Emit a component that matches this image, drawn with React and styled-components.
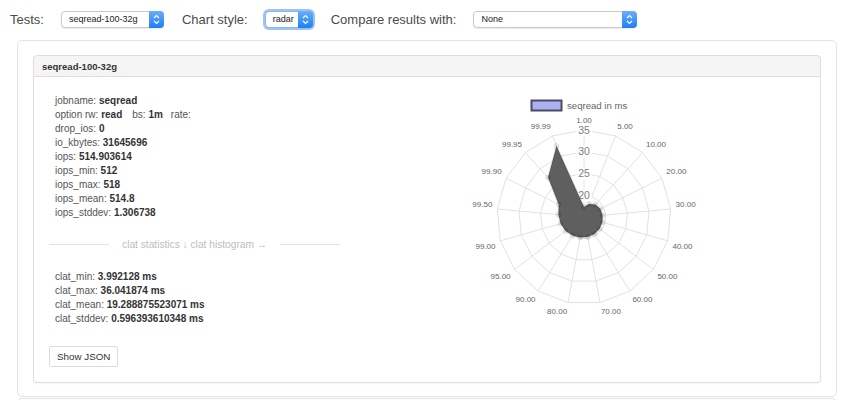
import styled, { createGlobalStyle, css } from 'styled-components';

const GlobalStyle = createGlobalStyle`
  body {
    margin: 0;
    background: #fff;
    font-family: "Liberation Sans", Arial, sans-serif;
    color: #333;
    overflow: hidden;
  }
`;

const LABELS = ['1.00', '5.00', '10.00', '20.00', '30.00', '40.00', '50.00', '60.00', '70.00', '80.00', '90.00', '95.00', '99.00', '99.50', '99.90', '99.95', '99.99'];
const VALUES = [17.3, 18.2, 18.9, 19.2, 19.3, 19.4, 19.5, 19.6, 19.7, 19.8, 20.0, 20.3, 20.6, 20.9, 21.5, 27.3, 32.5];

const CX = 229;
const CY = 140;
const R = 87;
const MIN = 15;
const MAX = 35;
const TICKS = [20, 25, 30, 35];

const radius = v => ((v - MIN) / (MAX - MIN)) * R;
const point = (i, r) => {
  const a = (i * 2 * Math.PI) / LABELS.length;
  return [CX + r * Math.sin(a), CY - r * Math.cos(a)];
};
const poly = pts => pts.map(p => p.map(n => n.toFixed(1)).join(',')).join(' ');

function Stepper() {
  return (
    <StepBox>
      <svg width="7" height="11" viewBox="0 0 7 11">
        <path d="M1 4 L3.5 1.5 L6 4 M1 7 L3.5 9.5 L6 7" fill="none" stroke="#fff" strokeWidth="1.2" />
      </svg>
    </StepBox>
  );
}

function Select({ value, width, focused }) {
  return (
    <SelectBox $width={width} $focused={focused}>
      <SelectText>{value}</SelectText>
      <Stepper />
    </SelectBox>
  );
}

function RadarChart() {
  const outer = LABELS.map((_, i) => point(i, R));
  const data = VALUES.map((v, i) => point(i, radius(v)));

  return (
    <svg width="465" height="300" viewBox="0 0 465 300">
      <rect x="176.5" y="23.5" width="30" height="10" fill="#aab1f0" stroke="#4b4b66" strokeWidth="2" />
      <text x="212" y="32" fontSize="9.6" fill="#666" fontFamily="Liberation Sans, Arial, sans-serif">
        seqread in ms
      </text>

      {TICKS.map(t => (
        <polygon
          key={t}
          points={poly(LABELS.map((_, i) => point(i, radius(t))))}
          fill="none"
          stroke="#e2e2e2"
          strokeWidth="1"
        />
      ))}
      {outer.map(([x, y], i) => (
        <line key={i} x1={CX} y1={CY} x2={x} y2={y} stroke="#e2e2e2" strokeWidth="1" />
      ))}

      {TICKS.map(t => {
        const y = CY - radius(t);
        return (
          <g key={t}>
            <rect x={CX - 8} y={y - 6} width="16" height="12" fill="rgba(255,255,255,0.75)" />
            <text
              x={CX}
              y={y + 3.7}
              fontSize="10.5"
              fill="#808080"
              textAnchor="middle"
              fontFamily="Liberation Sans, Arial, sans-serif"
            >
              {t}
            </text>
          </g>
        );
      })}

      <polygon points={poly(data)} fill="#5f5f5f" stroke="rgba(0,0,0,0.08)" strokeWidth="2" strokeLinejoin="round" />
      {data.map(([x, y], i) => (
        <circle key={i} cx={x} cy={y} r="2.5" fill="rgba(0,0,0,0.07)" stroke="rgba(0,0,0,0.08)" />
      ))}

      {LABELS.map((label, i) => {
        const a = (i * 360) / LABELS.length;
        const [x, y] = point(i, R + 5);
        const anchor = a === 0 || a === 180 ? 'middle' : a < 180 ? 'start' : 'end';
        const upper = a < 90 || a > 270;
        return (
          <text
            key={label}
            x={x}
            y={upper ? y - 2 : y + 7}
            fontSize="8"
            fill="#666"
            textAnchor={anchor}
            fontFamily="Liberation Sans, Arial, sans-serif"
          >
            {label}
          </text>
        );
      })}
    </svg>
  );
}

const STATS = [
  ['iops', '514.903614'],
  ['iops_min', '512'],
  ['iops_max', '518'],
  ['iops_mean', '514.8'],
  ['iops_stddev', '1.306738'],
];

const CLAT = [
  ['clat_min', '3.992128 ms'],
  ['clat_max', '36.041874 ms'],
  ['clat_mean', '19.288875523071 ms'],
  ['clat_stddev', '0.596393610348 ms'],
];

export default function App() {
  return (
    <>
      <GlobalStyle />
      <TopBar>
        <BarLabel>Tests:</BarLabel>
        <Select value="seqread-100-32g" width={103} />
        <BarLabel>Chart style:</BarLabel>
        <Select value="radar" width={48} focused />
        <BarLabel>Compare results with:</BarLabel>
        <Select value="None" width={164} />
      </TopBar>

      <Panel>
        <Card>
          <CardHeading>seqread-100-32g</CardHeading>
          <CardBody>
            <InfoColumn>
              <Stats>
                <Row>
                  jobname: <b>seqread</b>
                </Row>
                <Row>
                  option rw: <b>read</b>
                  <Gap $w={10}>bs: </Gap>
                  <b>1m</b>
                  <Gap $w={8}>rate:</Gap>
                </Row>
                <Row>
                  drop_ios: <b>0</b>
                </Row>
                <Row>
                  io_kbytes: <b>31645696</b>
                </Row>
                {STATS.map(([k, v]) => (
                  <Row key={k}>
                    {k}: <b>{v}</b>
                  </Row>
                ))}
              </Stats>

              <Divider>
                <DividerLine />
                <DividerText>clat statistics ↓ clat histogram →</DividerText>
                <DividerLine />
              </Divider>

              <Stats $top={19}>
                {CLAT.map(([k, v]) => (
                  <Row key={k}>
                    {k}: <b>{v}</b>
                  </Row>
                ))}
              </Stats>

              <JsonButton>Show JSON</JsonButton>
            </InfoColumn>
            <ChartColumn>
              <RadarChart />
            </ChartColumn>
          </CardBody>
        </Card>
      </Panel>
      <NextPanel />
    </>
  );
}

const TopBar = styled.div`
  display: flex;
  align-items: center;
  height: 18px;
  padding: 10px 10px 0;
`;

const BarLabel = styled.span`
  font-size: 13px;
  color: #4a4a4a;
  margin-right: 17px;
  white-space: nowrap;
`;

const SelectBox = styled.div`
  box-sizing: border-box;
  display: flex;
  align-items: center;
  width: ${p => p.$width}px;
  height: 17px;
  margin-right: 18px;
  background: #fff;
  border: 1px solid #c9c9c9;
  border-radius: 4px;
  box-shadow: 0 1px 1px rgba(0, 0, 0, 0.08);
  ${p =>
    p.$focused &&
    css`
      border-color: #8fb6ee;
      box-shadow: 0 0 0 2px #9cc2f7;
    `}
`;

const SelectText = styled.span`
  flex: 1;
  padding-left: 7px;
  font-size: 9px;
  color: #222;
  white-space: nowrap;
  overflow: hidden;
`;

const StepBox = styled.span`
  display: flex;
  align-items: center;
  justify-content: center;
  width: 15px;
  height: 17px;
  margin: -1px -1px -1px 0;
  border-radius: 0 4px 4px 0;
  background: linear-gradient(#6aaefb, #1f7ff3);
`;

const Panel = styled.div`
  margin: 12px 6px 0 17px;
  padding: 14px 15px 13px;
  border: 1px solid #e3e3e3;
  border-radius: 5px;
`;

const NextPanel = styled.div`
  margin: 1px 6px 0 17px;
  height: 4px;
  border: 1px solid #e3e3e3;
  border-bottom: none;
  border-radius: 5px 5px 0 0;
`;

const Card = styled.div`
  border-radius: 4px;
  box-shadow: 0 1px 2px rgba(0, 0, 0, 0.04);
`;

const CardHeading = styled.div`
  box-sizing: border-box;
  height: 22px;
  display: flex;
  align-items: center;
  padding: 0 8px;
  background: #f5f5f5;
  border: 1px solid #dedede;
  border-radius: 4px 4px 0 0;
  font-size: 9.5px;
  font-weight: bold;
  color: #333;
`;

const CardBody = styled.div`
  display: flex;
  border: 1px solid #dedede;
  border-top: none;
  border-radius: 0 0 4px 4px;
`;

const InfoColumn = styled.div`
  box-sizing: border-box;
  width: 321px;
  flex-shrink: 0;
  padding: 17px 15px 15px;
`;

const ChartColumn = styled.div`
  flex: 1;
  display: flex;
`;

const Stats = styled.div`
  padding-left: 6px;
  margin-top: ${p => p.$top || 0}px;
`;

const Row = styled.div`
  font-size: 10px;
  line-height: 14px;
  color: #555;
  white-space: nowrap;

  b {
    color: #333;
  }
`;

const Gap = styled.span`
  margin-left: ${p => p.$w}px;
`;

const Divider = styled.div`
  display: flex;
  align-items: center;
  gap: 13px;
  margin-top: 17px;
  height: 14px;
`;

const DividerLine = styled.div`
  flex: 1;
  height: 1px;
  background: #e2e2e2;
`;

const DividerText = styled.span`
  font-size: 10.2px;
  color: #bdbdbd;
  white-space: nowrap;
`;

const JsonButton = styled.button`
  display: block;
  margin-top: 20px;
  height: 21px;
  padding: 0 7px;
  background: #fff;
  border: 1px solid #dcdcdc;
  border-radius: 2px;
  font-family: "Liberation Sans", Arial, sans-serif;
  font-size: 9.8px;
  color: #333;
`;
